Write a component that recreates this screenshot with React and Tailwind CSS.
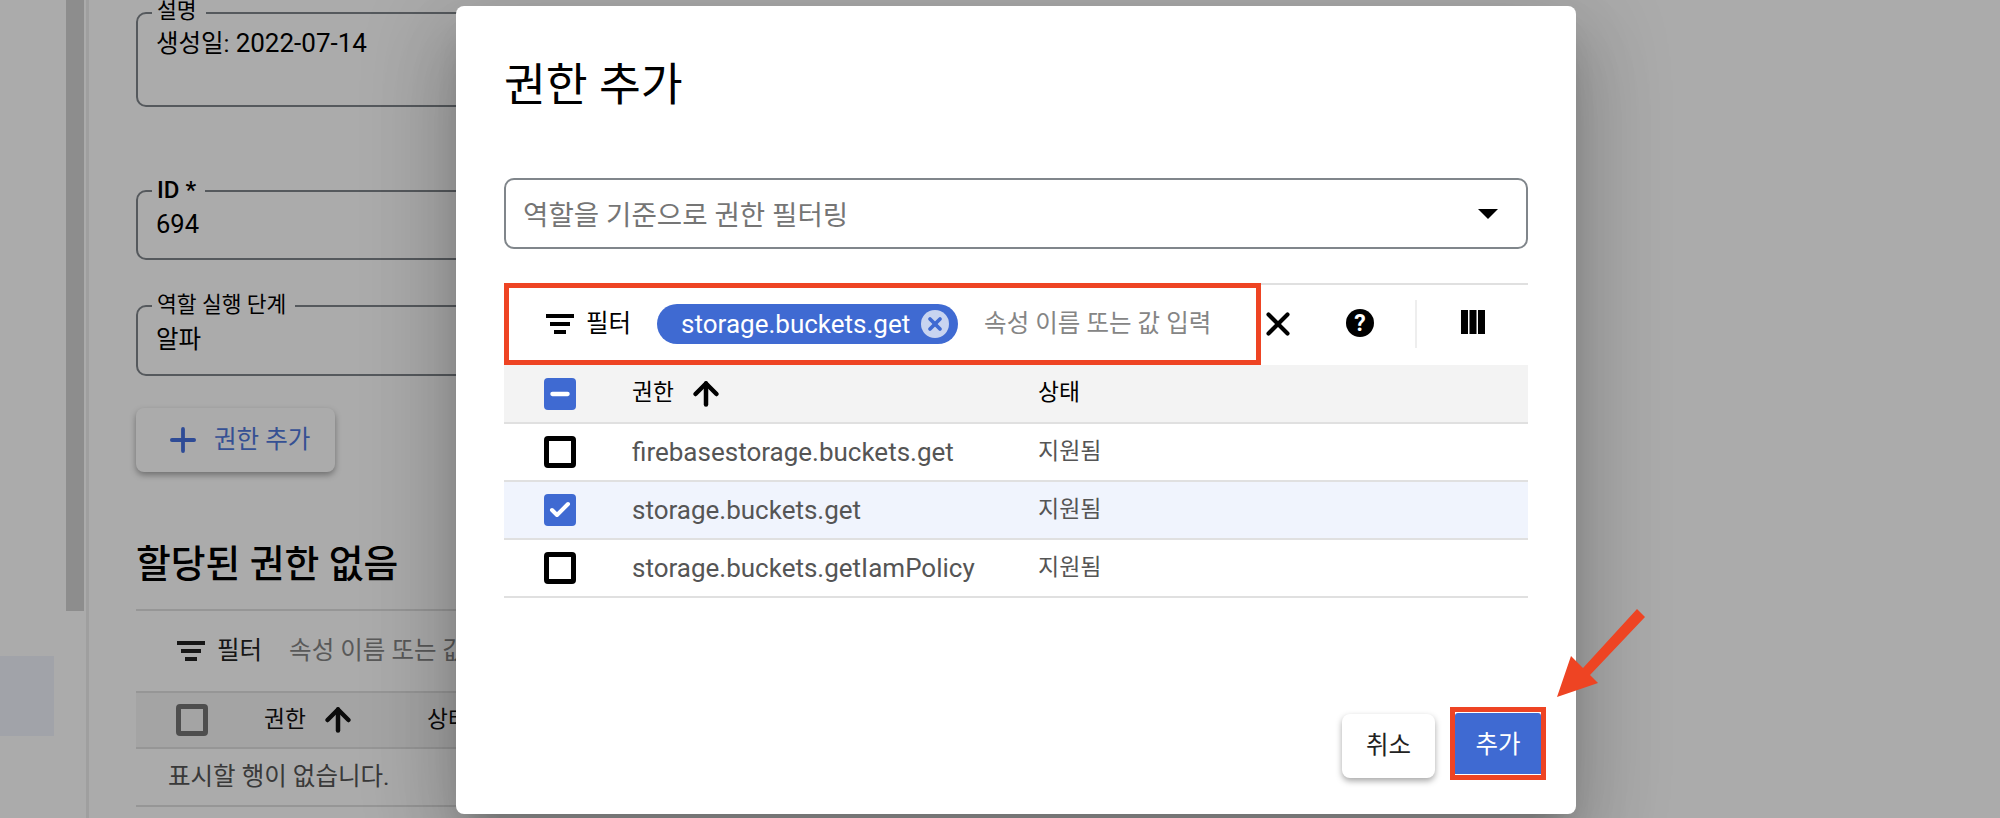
import { Plus, ArrowUp, Check, Minus, X } from 'lucide-react'

const FONT = "font-['Roboto','Noto_Sans_CJK_KR',sans-serif]"

function FilterIcon({ className }) {
  return (
    <svg viewBox="0 0 28 20" className={className} fill="currentColor">
      <rect x="0" y="0" width="28" height="4" />
      <rect x="4" y="8" width="20" height="4" />
      <rect x="8" y="16" width="12" height="4" />
    </svg>
  )
}

function Field({ label, value, gap, className }) {
  return (
    <div className={`relative w-[600px] rounded-[10px] border-2 border-[#7f858b] pl-[18px] ${className}`}>
      <span className={`absolute left-[14px] top-[-16px] bg-white pl-[5px] text-[21.5px] leading-[28px] text-black ${gap}`}>
        {label}
      </span>
      <p className="text-[24.5px] leading-[34px] text-black">{value}</p>
    </div>
  )
}

function Checkbox({ state, idle = 'border-black' }) {
  if (state === 'on' || state === 'some') {
    return (
      <span className="flex size-8 shrink-0 items-center justify-center rounded-[4px] bg-[#3f6ad2] text-white">
        {state === 'on' ? <Check size={24} strokeWidth={4} /> : <Minus size={26} strokeWidth={4} />}
      </span>
    )
  }
  return <span className={`size-8 shrink-0 rounded-[4px] border-[5px] ${idle}`} />
}

function Row({ name, selected }) {
  return (
    <div className={`flex h-[58px] items-center border-b-2 border-[#e0e0e0] pl-10 text-[#555] ${selected ? 'bg-[#f0f4fd]' : ''}`}>
      <Checkbox state={selected ? 'on' : 'off'} />
      <span className="ml-14 w-[406px] text-[26px]">{name}</span>
      <span className="text-[23px]">지원됨</span>
    </div>
  )
}

function AddDialog() {
  return (
    <div className="absolute left-[456px] top-[6px] flex h-[808px] w-[1120px] flex-col rounded-[8px] bg-white shadow-[0_22px_30px_-14px_rgba(0,0,0,0.2),0_48px_76px_6px_rgba(0,0,0,0.14),0_18px_92px_16px_rgba(0,0,0,0.12)]">
      <div className="px-12 pt-[52px]">
        <h2 className="text-[45.5px] font-normal leading-[56px] text-black">권한 추가</h2>

        <div className="mt-[64px] flex h-[71px] items-center justify-between rounded-[10px] border-2 border-[#80868b] pl-[17px] pr-[28px]">
          <span className="pt-[5px] text-[27.6px] text-[#757575]">역할을 기준으로 권한 필터링</span>
          <span className="size-0 border-x-[10px] border-t-[10px] border-x-transparent border-t-black" />
        </div>

        <div className="mt-[34px] flex h-[82px] items-start border-t-2 border-[#e0e0e0]">
          <div className="mt-[-2px] flex h-[82px] w-[757px] items-center border-[5px] border-[#ee4423] pl-[37px]">
            <FilterIcon className="h-5 w-7 text-black" />
            <span className="ml-3 text-[24.5px] text-black">필터</span>
            <span className="ml-[26px] flex h-10 w-[301px] items-center rounded-full bg-[#3f6ad2] pl-6 text-[26px] text-white">
              storage.buckets.get
              <span className="ml-[11px] flex size-7 items-center justify-center rounded-full bg-[#c8d4f0] text-[#3f6ad2]">
                <X size={20} strokeWidth={4.5} />
              </span>
            </span>
            <span className="ml-[26px] text-[24.5px] text-[#858585]">속성 이름 또는 값 입력</span>
          </div>
          <X size={38} strokeWidth={2.6} className="ml-[-2px] mt-[20px] text-black" />
          <span className="ml-[49px] mt-[24px] flex size-7 items-center justify-center rounded-full bg-black text-[23px] font-bold leading-none text-white">?</span>
          <span className="ml-[41px] mt-[15px] h-12 w-[2px] bg-[#eeeeee]" />
          <svg viewBox="0 0 24 24" className="ml-[44px] mt-[25px] size-6 text-black" fill="currentColor">
            <rect x="0" y="0" width="7" height="24" />
            <rect x="8.5" y="0" width="7" height="24" />
            <rect x="17" y="0" width="7" height="24" />
          </svg>
        </div>

        <div className="flex h-[59px] items-center border-b-2 border-[#e0e0e0] bg-[#f3f3f3] pl-10 text-[22.75px] text-black">
          <Checkbox state="some" />
          <span className="ml-14 flex w-[406px] items-center gap-[14px]">
            권한 <ArrowUp size={36} strokeWidth={3} />
          </span>
          <span>상태</span>
        </div>
        <Row name="firebasestorage.buckets.get" />
        <Row name="storage.buckets.get" selected />
        <Row name="storage.buckets.getIamPolicy" />
      </div>

      <div className="mt-auto flex items-end justify-end pb-[34px] pr-[30px]">
        <button className="mb-[2px] mr-[15px] h-16 w-[93px] rounded-[8px] bg-white text-[24.5px] text-[#222] shadow-[0_3px_6px_rgba(0,0,0,0.35)]">
          취소
        </button>
        <div className="h-[73px] w-[96px] border-[5px] border-[#ee4423] pt-[1px]">
          <button className="h-[61px] w-full rounded-t-[3px] bg-[#3f6ad2] pt-[4px] text-[24.5px] text-white">추가</button>
        </div>
      </div>
    </div>
  )
}

export default function App() {
  return (
    <div className={`relative flex h-[818px] w-[2000px] overflow-hidden bg-white ${FONT}`}>
      {/* left rail */}
      <aside className="relative w-[89px] shrink-0 border-r-[3px] border-[#ededed]">
        <div className="absolute left-[66px] top-0 h-[611px] w-[18px] bg-[#d2d2d2]" />
        <div className="ml-0 mt-[656px] h-20 w-[54px] bg-[#f1f4fd]" />
      </aside>

      {/* page under the dialog */}
      <main className="ml-[47px] w-[700px] shrink-0 pt-[12px]">
        <Field
          label={<span className="relative top-[-1px]">설명</span>}
          value={<>생성일: <span className="text-[26px]">2022-07-14</span></>}
          gap="pr-[9px]"
          className="h-[95px] pt-[12px]"
        />
        <Field
          label={<span className="text-[24px] font-medium">ID *</span>}
          value={<span className="text-[25.5px]">694</span>}
          gap="pr-[9px]"
          className="mt-[83px] h-[70px] pt-[15px]"
        />
        <Field label="역할 실행 단계" value="알파" gap="pr-[9px]" className="mt-[45px] h-[71px] pt-[16px]" />

        <button className="mt-[32px] flex h-16 w-[199px] items-center gap-[17px] rounded-[8px] bg-white pl-[33px] text-[24.5px] text-[#4f78dc] shadow-[0_3px_6px_rgba(0,0,0,0.35)]">
          <Plus size={38} strokeWidth={2.4} className="ml-[-5px] mr-[-5px] text-[#4570e0]" />
          권한 추가
        </button>

        <h3 className="mt-[69px] text-[37.8px] font-medium leading-[46px] text-black">할당된 권한 없음</h3>
        <div className="mt-[22px] flex h-[82px] items-center border-t-2 border-[#e0e0e0] pl-[41px]">
          <FilterIcon className="h-5 w-7 text-[#222]" />
          <span className="ml-3 text-[24.5px] text-[#222]">필터</span>
          <span className="ml-[27px] text-[24.5px] text-[#858585]">속성 이름 또는 값 입력</span>
        </div>
        <div className="flex h-[58px] items-center border-y-2 border-[#e0e0e0] bg-[#f5f5f5] pl-10 text-[22.75px] text-[#111]">
          <Checkbox state="off" idle="border-[#757575]" />
          <span className="ml-14 flex w-[163px] items-center gap-[14px]">
            권한 <ArrowUp size={36} strokeWidth={3} />
          </span>
          <span>상태</span>
        </div>
        <div className="flex h-[58px] items-center border-b-2 border-[#e0e0e0] pl-[32px] text-[24.5px] text-[#555]">
          표시할 행이 없습니다.
        </div>
      </main>

      {/* scrim */}
      <div className="absolute inset-0 bg-black/33" />

      <AddDialog />

      {/* annotation arrow */}
      <svg viewBox="0 0 100 100" className="absolute left-[1550px] top-[605px] size-[100px] text-[#ee4423]" fill="currentColor">
        <polygon points="7,92 21,51 33,63 87,4 95,12 40,70 48,78" />
      </svg>
    </div>
  )
}
